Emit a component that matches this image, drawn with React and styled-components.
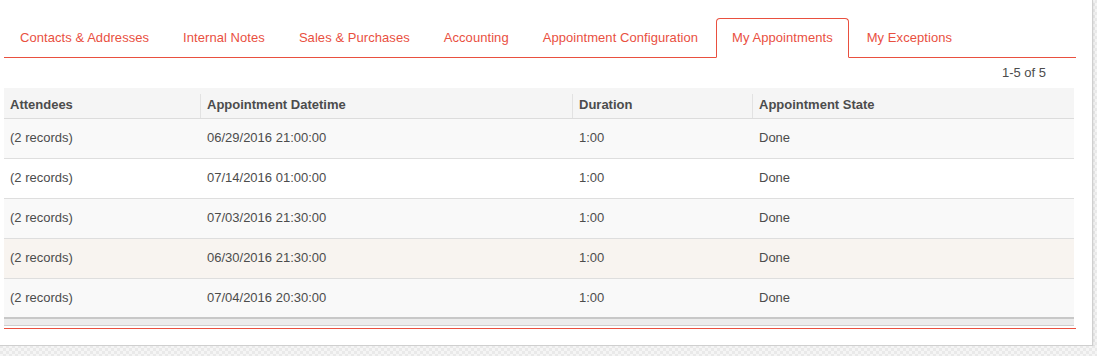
import React from 'react';
import styled, { createGlobalStyle } from 'styled-components';

const accent = '#e9503f';

const GlobalStyle = createGlobalStyle`
  body {
    margin: 0;
    font-family: "Liberation Sans", Arial, sans-serif;
    font-size: 13px;
    color: #4c4c4c;
    background: repeating-conic-gradient(#e9e9e9 0 25%, #f5f5f5 0 50%) 0 0 / 6px 6px;
  }
`;

const tabs = [
  'Contacts & Addresses',
  'Internal Notes',
  'Sales & Purchases',
  'Accounting',
  'Appointment Configuration',
  'My Appointments',
  'My Exceptions',
];

const appointments = [
  { attendees: '(2 records)', datetime: '06/29/2016 21:00:00', duration: '1:00', state: 'Done' },
  { attendees: '(2 records)', datetime: '07/14/2016 01:00:00', duration: '1:00', state: 'Done' },
  { attendees: '(2 records)', datetime: '07/03/2016 21:30:00', duration: '1:00', state: 'Done' },
  { attendees: '(2 records)', datetime: '06/30/2016 21:30:00', duration: '1:00', state: 'Done', hover: true },
  { attendees: '(2 records)', datetime: '07/04/2016 20:30:00', duration: '1:00', state: 'Done' },
];

const columns = [
  { label: 'Attendees', width: 196 },
  { label: 'Appointment Datetime', width: 372 },
  { label: 'Duration', width: 180 },
  { label: 'Appointment State', width: 322 },
];

const App = () => (
  <>
    <GlobalStyle />
    <Sheet>
      <Notebook>
        <TabList>
          {tabs.map((t) => (
            <Tab key={t} $active={t === 'My Appointments'}>{t}</Tab>
          ))}
        </TabList>
        <TabContent>
          <Pager>1-5 of 5</Pager>
          <Table>
            <colgroup>
              {columns.map((c) => (
                <col key={c.label} width={c.width} />
              ))}
            </colgroup>
            <thead>
              <tr>
                {columns.map((c) => (
                  <Th key={c.label}>{c.label}</Th>
                ))}
              </tr>
            </thead>
            <tbody>
              {appointments.map((a, i) => (
                <Row key={i} $odd={i % 2 === 0} $hover={a.hover}>
                  <Td>{a.attendees}</Td>
                  <Td>{a.datetime}</Td>
                  <Td>{a.duration}</Td>
                  <Td>{a.state}</Td>
                </Row>
              ))}
            </tbody>
            <tfoot>
              <tr>
                <FootCell colSpan={4} />
              </tr>
            </tfoot>
          </Table>
        </TabContent>
      </Notebook>
    </Sheet>
  </>
);

const Sheet = styled.div`
  box-sizing: border-box;
  width: 1093px;
  height: 346px;
  padding: 18px 0 0 4px;
  background: #fff;
  border-right: 1px solid #cfcfcf;
  border-bottom: 1px solid #cfcfcf;
  box-shadow: 1px 1px 2px rgba(0, 0, 0, 0.08);
`;

const Notebook = styled.div`
  width: 1072px;
`;

const TabList = styled.ul`
  display: flex;
  margin: 0;
  padding: 0;
  list-style: none;
  border-bottom: 1px solid ${accent};
`;

const Tab = styled.li`
  margin: 0 2px -1px 0;
  padding: 10px 15px;
  line-height: 18px;
  letter-spacing: 0.06px;
  color: ${accent};
  border: 1px solid ${(p) => (p.$active ? accent : 'transparent')};
  border-bottom-color: ${(p) => (p.$active ? '#fff' : 'transparent')};
  border-radius: 4px 4px 0 0;
  background: ${(p) => (p.$active ? '#fff' : 'transparent')};
  cursor: pointer;
`;

const TabContent = styled.div`
  border-bottom: 1px solid ${accent};
`;

const Pager = styled.div`
  padding: 6px 30px 6px 0;
  line-height: 18px;
  text-align: right;
`;

const Table = styled.table`
  width: 1070px;
  margin-bottom: 2px;
  border-collapse: separate;
  border-spacing: 0;
  table-layout: fixed;
`;

const Th = styled.th`
  position: relative;
  box-sizing: border-box;
  height: 31px;
  padding: 3px 6px 0 7px;
  text-align: left;
  font-weight: bold;
  background: #f5f5f5;
  border-bottom: 1px solid #dcdcdc;

  &:first-child {
    padding-left: 6px;
  }

  & + &::before {
    content: '';
    position: absolute;
    left: 0;
    top: 6px;
    bottom: 0;
    width: 1px;
    background: #e2e2e2;
  }
`;

const Td = styled.td`
  box-sizing: border-box;
  height: 40px;
  padding: 0 6px 2px 7px;
  border-bottom: 1px solid #dedede;

  &:first-child {
    padding-left: 6px;
  }
`;

const Row = styled.tr`
  background: ${(p) => (p.$hover ? '#f8f4f0' : p.$odd ? '#f9f9f9' : '#fff')};

  &:last-child td {
    height: 38px;
    padding-bottom: 2px;
    border-bottom: none;
  }
`;

const FootCell = styled.td`
  height: 9px;
  padding: 0;
  box-sizing: border-box;
  background: #ececec;
  border-top: 2px solid #c8c8c8;
  border-bottom: 1px solid #cfcfcf;
`;

export default App;
